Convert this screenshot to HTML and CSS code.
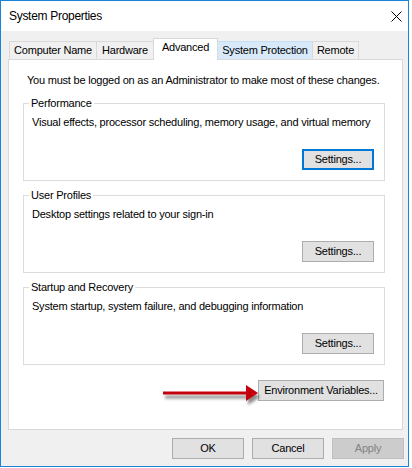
FILE: index.html
```html
<!DOCTYPE html>
<html>
<head>
<meta charset="utf-8">
<title>System Properties</title>
<link rel="stylesheet" href="styles.css">
</head>
<body>
<div class="window">
  <div class="titlebar">
    <span class="title">System Properties</span>
    <svg class="close" width="11" height="11" viewBox="0 0 11 11"><path d="M0.5 0.5 L10.5 10.5 M10.5 0.5 L0.5 10.5" stroke="#000" stroke-width="1" fill="none"/></svg>
  </div>
  <div class="content">
    <div class="tabs">
      <div class="tab w-cn">Computer Name</div>
      <div class="tab w-hw">Hardware</div>
      <div class="tab active w-adv">Advanced</div>
      <div class="tab hover w-sp">System Protection</div>
      <div class="tab w-rm">Remote</div>
    </div>
    <div class="panel">
      <p class="note">You must be logged on as an Administrator to make most of these changes.</p>
      <div class="group">
        <span class="legend">Performance</span>
        <span class="desc">Visual effects, processor scheduling, memory usage, and virtual memory</span>
        <button class="btn focus">Settings...</button>
      </div>
      <div class="group">
        <span class="legend">User Profiles</span>
        <span class="desc">Desktop settings related to your sign-in</span>
        <button class="btn">Settings...</button>
      </div>
      <div class="group">
        <span class="legend">Startup and Recovery</span>
        <span class="desc">System startup, system failure, and debugging information</span>
        <button class="btn">Settings...</button>
      </div>
      <div class="env-row">
        <button class="btn wide">Environment Variables...</button>
      </div>
      <svg class="arrow" width="108" height="28" viewBox="0 0 108 28">
        <defs>
          <filter id="sh" x="-20%" y="-50%" width="140%" height="200%">
            <feGaussianBlur stdDeviation="1.6"/>
          </filter>
        </defs>
        <g transform="translate(2,4)" fill="#000" opacity="0.45" filter="url(#sh)">
          <rect x="5" y="8.5" width="84" height="3"/>
          <polygon points="88,2 100,10 88,18"/>
        </g>
        <rect x="5" y="8.5" width="84" height="3" fill="#c3000b"/>
        <polygon points="88,2 100,10 88,18" fill="#c3000b"/>
      </svg>
    </div>
    <div class="footer">
      <button class="btn">OK</button>
      <button class="btn">Cancel</button>
      <button class="btn disabled">Apply</button>
    </div>
  </div>
</div>
</body>
</html>
```

FILE: styles.css
```css
html, body {
  margin: 0;
  background: #ffffff;
}

body {
  font-family: "Liberation Sans", Arial, sans-serif;
  font-size: 11px;
  letter-spacing: -0.22px;
  color: #000;
}

.window {
  width: 409px;
  height: 467px;
  box-sizing: border-box;
  border: 1px solid #1883d7;
  background: #f0f0f0;
  display: flex;
  flex-direction: column;
}

.titlebar {
  flex: none;
  height: 30px;
  background: #fff;
  display: flex;
  align-items: center;
  padding-left: 8px;
}

.title {
  font-size: 12px;
  letter-spacing: -0.3px;
}

.close {
  margin-left: auto;
  margin-right: 6px;
}

.content {
  flex: 1;
  padding-top: 7px;
}

.tabs {
  display: flex;
  align-items: flex-end;
  height: 21px;
  margin-left: 8px;
}

.tab {
  height: 18px;
  box-sizing: border-box;
  border: 1px solid #d9d9d9;
  border-bottom: none;
  background: #f0f0f0;
  display: flex;
  align-items: center;
  justify-content: center;
  margin-left: -1px;
  line-height: 13px;
  white-space: nowrap;
}

.tab:first-child {
  margin-left: 0;
}

.tab.active {
  height: 22px;
  margin-bottom: -1px;
  background: #fff;
  position: relative;
  z-index: 1;
  align-items: flex-start;
  padding-top: 2px;
}

.tab.hover {
  background: #d8eaf9;
  border-color: #c6def4;
}

.w-cn { width: 88px; }
.w-hw { width: 58px; }
.w-adv { width: 65px; }
.w-sp { width: 96px; }
.w-rm { width: 47px; }

.panel {
  margin-left: 7px;
  width: 395px;
  height: 371px;
  box-sizing: border-box;
  border: 1px solid #d9d9d9;
  background: #fff;
  position: relative;
  display: flex;
  flex-direction: column;
}

.note {
  margin: 14px 0 0 18px;
  line-height: 13px;
  white-space: nowrap;
}

.group {
  margin: 16px 0 0 14px;
  width: 362px;
  height: 78px;
  box-sizing: border-box;
  border: 1px solid #dcdcdc;
  padding: 0 10px 0 5px;
  display: flex;
  flex-direction: column;
  flex: none;
}

.group + .group {
  margin-top: 14px;
}

.legend {
  margin-top: -7px;
  align-self: flex-start;
  background: #fff;
  padding: 0 2px;
  line-height: 13px;
}

.desc {
  margin: 6px 0 0 3px;
  line-height: 13px;
  white-space: nowrap;
}

.group .btn {
  align-self: flex-end;
  margin-top: 20px;
}

.btn {
  width: 72px;
  height: 21px;
  box-sizing: border-box;
  border: 1px solid #adadad;
  background: #e1e1e1;
  font: inherit;
  letter-spacing: inherit;
  color: #000;
  padding: 0;
  line-height: 19px;
  flex: none;
}

.btn.focus {
  border: 2px solid #0078d7;
  line-height: 17px;
}

.btn.wide {
  width: 126px;
}

.btn.disabled {
  background: #cccccc;
  border-color: #bfbfbf;
  color: #838383;
}

.env-row {
  display: flex;
  justify-content: flex-end;
  margin: 15px 18px 0 0;
}

.arrow {
  position: absolute;
  left: 149px;
  top: 323px;
}

.footer {
  display: flex;
  justify-content: flex-end;
  gap: 8px;
  margin: 8px 4px 0 0;
}
```
